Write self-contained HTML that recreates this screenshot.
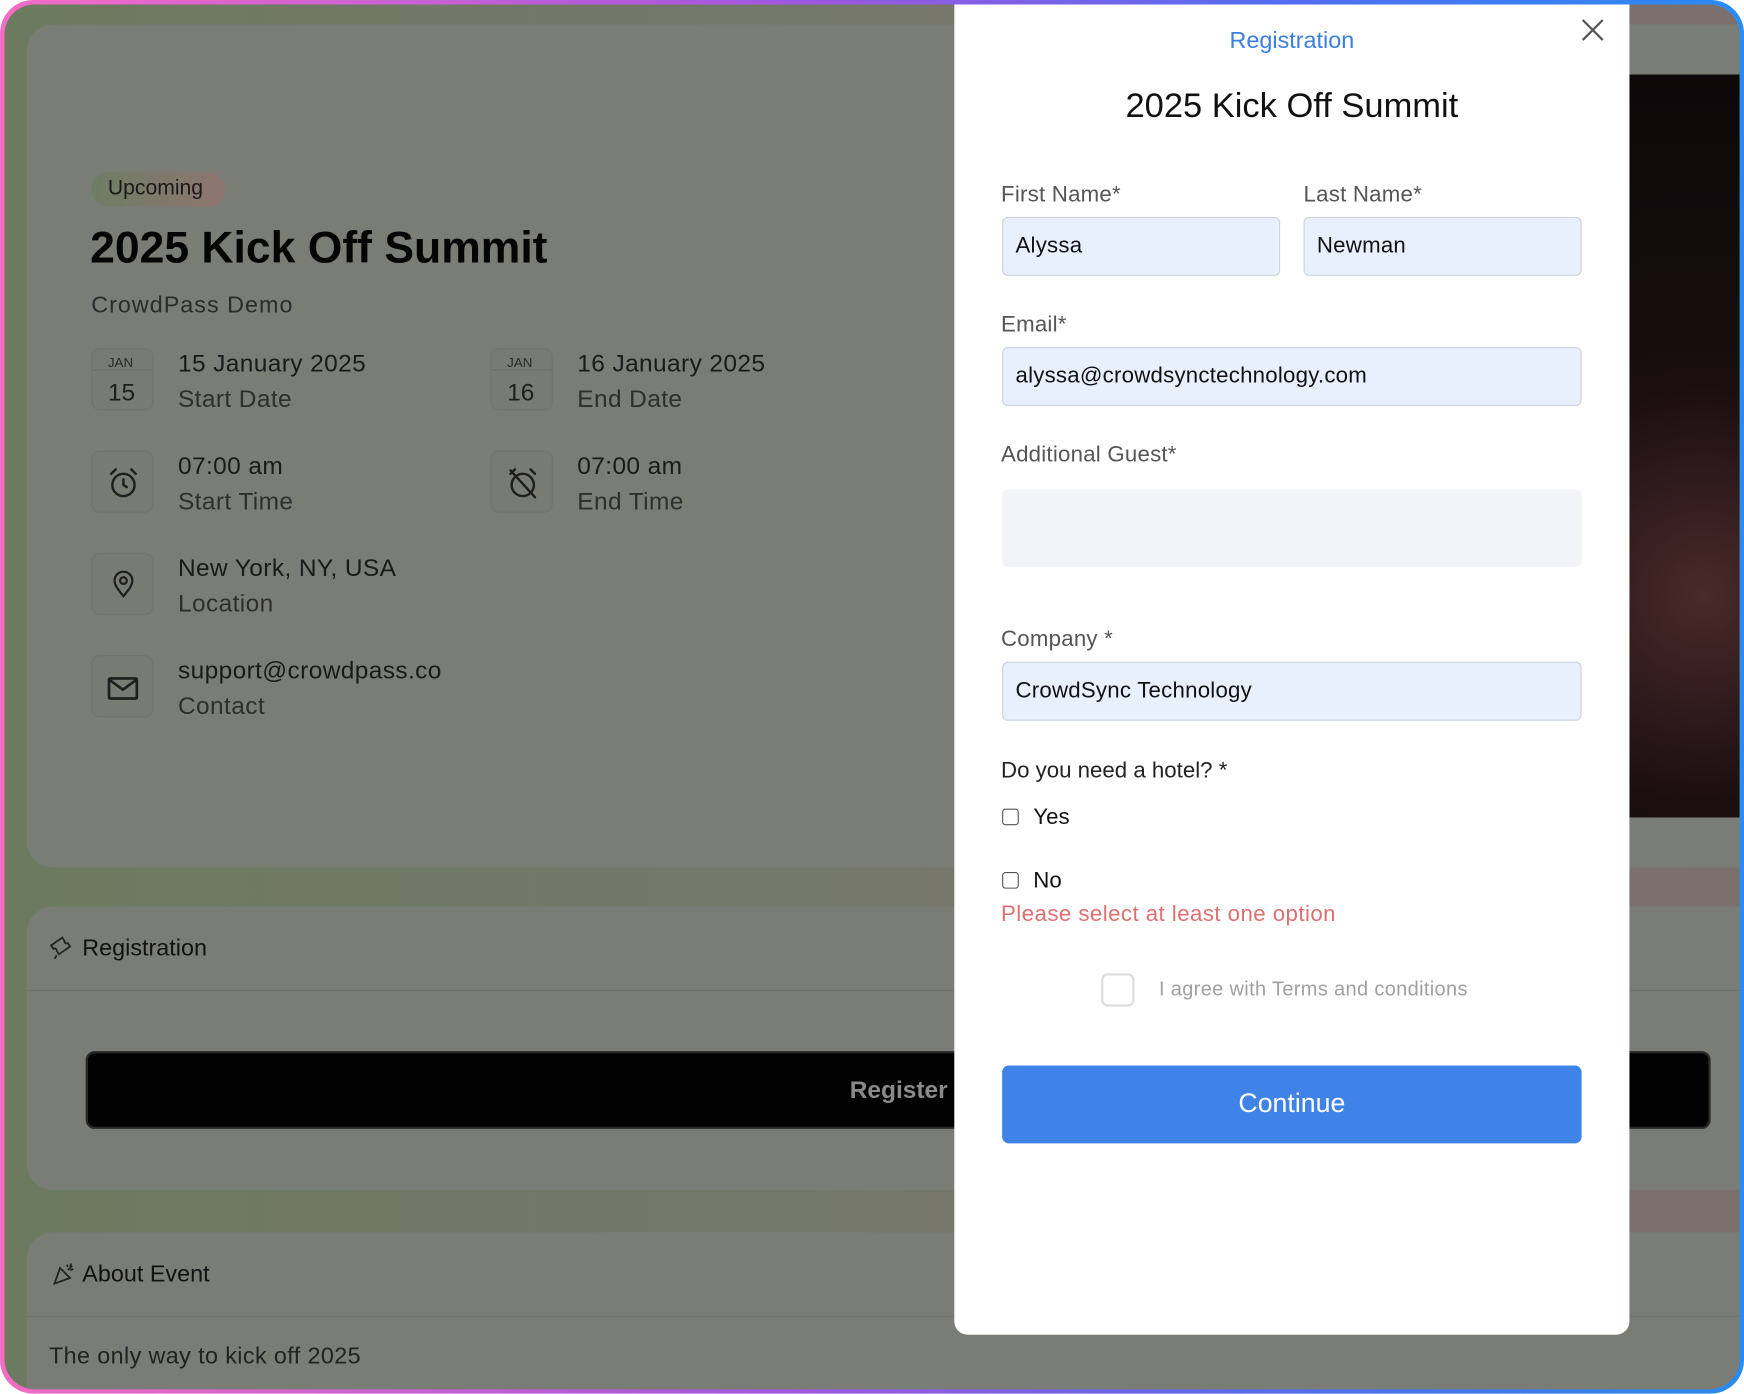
<!DOCTYPE html>
<html><head><meta charset="utf-8"><style>
html,body{margin:0;padding:0;width:1744px;height:1394px;overflow:hidden;background:#fff}
#w{position:absolute;left:0;top:0;width:1568px;height:1253px;transform:scale(1.112245);transform-origin:0 0;font-family:"Liberation Sans",sans-serif}
.frame{position:absolute;left:0;top:0;width:1568px;height:1253px;border-radius:30px;background:linear-gradient(90deg,#f46cc6 0%,#a257e0 45%,#4f6ef0 75%,#2a8cf2 100%)}
.bg{position:absolute;left:4px;top:4px;right:4px;bottom:4px;border-radius:27px;background:linear-gradient(90deg,#6c7a5f 0%,#74786a 45%,#7a726c 80%,#7c706c 100%);overflow:hidden}
.card{position:absolute;background:#7a7d76;border-radius:24px}
.t{position:absolute;white-space:nowrap}
.ib{position:absolute;width:54px;height:54px;border:1px solid #71746c;border-radius:8px;background:#787b73}
.lbl{position:absolute;left:42px;font-size:20px;color:#555;letter-spacing:.2px}
.inp{position:absolute;left:43px;height:51px;background:#e8f0fe;border:1px solid #ccd3dd;border-radius:5px;box-sizing:border-box;font-size:20px;color:#111;padding-left:11px;line-height:51px;letter-spacing:.2px}
.cb{position:absolute;width:13px;height:13px;border:1.5px solid #555;border-radius:3px}
.l{letter-spacing:.35px}
</style></head><body><div id="w">
<div class="frame"><div class="bg">
 <div class="card" style="left:20px;top:18px;width:1560px;height:758px"></div>
 <div style="position:absolute;left:1461px;top:63px;width:110px;height:668px;background:radial-gradient(circle at 60% 70%,#4a2a2a 0%,#1a0e0f 40%,#0d0809 100%)"></div>
 <div class="card" style="left:20px;top:811px;width:1560px;height:255px"></div>
 <div style="position:absolute;left:20px;top:886px;width:1560px;height:1px;background:#6f726b"></div>
 <div style="position:absolute;left:73px;top:941px;width:1461px;height:70px;background:#020202;border:2px solid #2a2a2a;border-radius:8px;box-sizing:border-box"></div>
 <div class="t" style="left:760px;top:963px;font-size:22px;color:#8a8a8a;font-weight:bold">Register</div>
 <div class="card" style="left:20px;top:1104px;width:1560px;height:200px"></div>
 <div style="position:absolute;left:20px;top:1179px;width:1560px;height:1px;background:#6f726b"></div>
</div></div>

<div style="position:absolute;left:82px;top:155px;width:121px;height:31px;border-radius:16px;background:linear-gradient(90deg,#6f7d65,#8e7570)"></div>
<div class="t" style="left:97px;top:159px;font-size:19px;color:#1a1a1a">Upcoming</div>
<div class="t" style="left:81px;top:201px;font-size:40px;font-weight:bold;color:#050505">2025 Kick Off Summit</div>
<div class="t l" style="left:82px;top:263px;font-size:21px;color:#2b2b2b;letter-spacing:.9px">CrowdPass Demo</div>

<div class="ib" style="left:82px;top:313px"><div style="position:absolute;top:18px;left:0;right:0;height:1px;background:#6c6f68"></div><div class="t" style="left:14px;top:5px;font-size:12px;color:#2a2a2a">JAN</div><div class="t" style="left:14px;top:26px;font-size:22px;color:#1e1e1e">15</div></div>
<div class="t l" style="left:160px;top:314px;font-size:22px;color:#1a1a1a">15 January 2025</div>
<div class="t l" style="left:160px;top:346px;font-size:22px;color:#2e2e2e">Start Date</div>
<div class="ib" style="left:441px;top:313px"><div style="position:absolute;top:18px;left:0;right:0;height:1px;background:#6c6f68"></div><div class="t" style="left:14px;top:5px;font-size:12px;color:#2a2a2a">JAN</div><div class="t" style="left:14px;top:26px;font-size:22px;color:#1e1e1e">16</div></div>
<div class="t l" style="left:519px;top:314px;font-size:22px;color:#1a1a1a">16 January 2025</div>
<div class="t l" style="left:519px;top:346px;font-size:22px;color:#2e2e2e">End Date</div>

<div class="ib" style="left:82px;top:405px"><svg width="54" height="54" viewBox="0 0 54 54" fill="none" stroke="#1e1e1e" stroke-width="2.2" stroke-linecap="round"><circle cx="28" cy="30" r="10"/><path d="M28 25v5l3 2M17 20l4-4M39 20l-4-4"/></svg></div>
<div class="t l" style="left:160px;top:406px;font-size:22px;color:#1a1a1a">07:00 am</div>
<div class="t l" style="left:160px;top:438px;font-size:22px;color:#2e2e2e">Start Time</div>
<div class="ib" style="left:441px;top:405px"><svg width="54" height="54" viewBox="0 0 54 54" fill="none" stroke="#1e1e1e" stroke-width="2.2" stroke-linecap="round"><circle cx="28" cy="30" r="10"/><path d="M17 20l4-4M39 20l-4-4M17 17l22 24"/></svg></div>
<div class="t l" style="left:519px;top:406px;font-size:22px;color:#1a1a1a">07:00 am</div>
<div class="t l" style="left:519px;top:438px;font-size:22px;color:#2e2e2e">End Time</div>

<div class="ib" style="left:82px;top:497px"><svg width="54" height="54" viewBox="0 0 54 54" fill="none" stroke="#1e1e1e" stroke-width="2"><path d="M28 38c-5-6-8-10-8-14a8 8 0 0 1 16 0c0 4-3 8-8 14z"/><circle cx="28" cy="24" r="3"/></svg></div>
<div class="t l" style="left:160px;top:498px;font-size:22px;color:#1a1a1a">New York, NY, USA</div>
<div class="t l" style="left:160px;top:530px;font-size:22px;color:#2e2e2e">Location</div>
<div class="ib" style="left:82px;top:589px"><svg width="54" height="54" viewBox="0 0 54 54" fill="none" stroke="#1e1e1e" stroke-width="2.4"><rect x="15" y="20" width="25" height="18" rx="1"/><path d="M15 21l12.5 9 12.5-9"/></svg></div>
<div class="t l" style="left:160px;top:590px;font-size:22px;color:#1a1a1a">support@crowdpass.co</div>
<div class="t l" style="left:160px;top:622px;font-size:22px;color:#2e2e2e">Contact</div>

<svg style="position:absolute;left:43px;top:840px" width="28" height="26" viewBox="0 0 28 26" fill="none" stroke="#222" stroke-width="1.6"><path d="M3 10l10-7 2 3a2 2 0 0 0 3 2l2 3-10 7-2-3a2 2 0 0 0-3-2z"/><path d="M6 22l2-3"/></svg>
<div class="t" style="left:74px;top:841px;font-size:21px;color:#111">Registration</div>
<svg style="position:absolute;left:46px;top:1133px" width="24" height="24" viewBox="0 0 24 24" fill="none" stroke="#222" stroke-width="1.6"><path d="M3 21l5-14 9 9z"/><path d="M14 4l1 2M18 3l-1 3M20 8l-3 1M15 9l4-4"/></svg>
<div class="t" style="left:74px;top:1134px;font-size:21px;color:#111">About Event</div>
<div class="t l" style="left:44px;top:1208px;font-size:21px;color:#222">The only way to kick off 2025</div>

<div style="position:absolute;left:858px;top:4px;width:607px;height:1196px;background:#fff;border-radius:0 0 12px 12px">
 <div class="t" style="left:0;right:0;text-align:center;top:21px;font-size:21px;color:#3b7fe0">Registration</div>
 <svg style="position:absolute;left:563px;top:12px" width="22" height="22" viewBox="0 0 22 22" stroke="#555" stroke-width="2"><path d="M2 2l18 18M20 2L2 20"/></svg>
 <div class="t" style="left:0;right:0;text-align:center;top:73px;font-size:31px;color:#111">2025 Kick Off Summit</div>
 <div class="lbl" style="top:160px">First Name*</div>
 <div class="lbl" style="top:160px;left:314px">Last Name*</div>
 <div class="inp" style="top:191px;width:250px;height:53px">Alyssa</div>
 <div class="inp" style="top:191px;left:314px;width:250px;height:53px">Newman</div>
 <div class="lbl" style="top:277px">Email*</div>
 <div class="inp" style="top:308px;width:521px;height:53px">alyssa@crowdsynctechnology.com</div>
 <div class="lbl" style="top:394px">Additional Guest*</div>
 <div style="position:absolute;left:43px;top:436px;width:521px;height:70px;background:#f3f4f7;border-radius:6px"></div>
 <div class="lbl" style="top:560px">Company *</div>
 <div class="inp" style="top:591px;width:521px;height:53px">CrowdSync Technology</div>
 <div class="t" style="left:42px;top:678px;font-size:20px;color:#222">Do you need a hotel? *</div>
 <div class="cb" style="left:43px;top:723px"></div>
 <div class="t" style="left:71px;top:720px;font-size:20px;color:#111">Yes</div>
 <div class="cb" style="left:43px;top:780px"></div>
 <div class="t" style="left:71px;top:777px;font-size:20px;color:#111">No</div>
 <div class="t" style="left:42px;top:807px;font-size:20px;color:#e07070;letter-spacing:.4px">Please select at least one option</div>
 <div style="position:absolute;left:132px;top:871px;width:26px;height:26px;border:2px solid #ddd;border-radius:6px"></div>
 <div class="t" style="left:184px;top:875px;font-size:18px;color:#a0a0a0;letter-spacing:.3px">I agree with Terms and conditions</div>
 <div style="position:absolute;left:43px;top:954px;width:521px;height:70px;background:#3f82e8;border-radius:6px;color:#fff;font-size:24px;text-align:center;line-height:70px">Continue</div>
</div>
</div></body></html>
